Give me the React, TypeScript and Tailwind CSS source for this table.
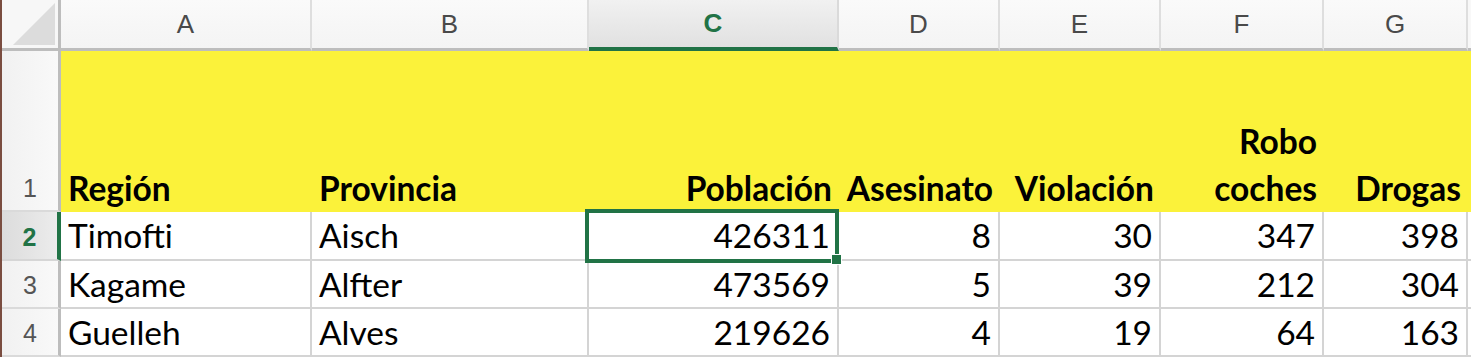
import React from 'react'

const GREEN = '#217346'
const YELLOW = '#fbf23a'

const cols = ['A', 'B', 'C', 'D', 'E', 'F', 'G']

// filas de datos: texto alineado a la izquierda en A y B, números a la derecha
const rows = [
  { n: 2, region: 'Timofti', prov: 'Aisch', vals: [426311, 8, 30, 347, 398] },
  { n: 3, region: 'Kagame', prov: 'Alfter', vals: [473569, 5, 39, 212, 304] },
  { n: 4, region: 'Guelleh', prov: 'Alves', vals: [219626, 4, 19, 64, 163] },
]

const bodyFont = { fontFamily: 'Lato, "Open Sans", sans-serif' }
const uiFont = { fontFamily: '"Liberation Sans", Arial, sans-serif' }

function ColHeader({ label, selected }: { label: string; selected?: boolean }) {
  return (
    <div
      style={uiFont}
      className={
        selected
          ? 'flex items-center justify-center border-r-2 border-r-[#dadada] border-b-4 border-b-[#217346] bg-gradient-to-b from-[#f1f1f1] to-[#e1e1e1] text-[26px] font-bold text-[#217346]'
          : 'flex items-center justify-center border-r-2 border-r-[#dedede] border-b-[3px] border-b-[#bdbdbd] bg-gradient-to-b from-[#fafafa] to-[#f4f4f4] text-[26px] text-[#4a4a4a]'
      }
    >
      {label}
    </div>
  )
}

function RowHeader({ n, selected }: { n: number; selected?: boolean }) {
  return (
    <div
      style={uiFont}
      className={
        selected
          ? 'flex items-end justify-center pb-[9px] border-r-4 border-r-[#217346] border-b-2 border-b-[#d6d6d6] bg-gradient-to-r from-[#dcdcdc] to-[#ececec] text-[25px] font-bold text-[#217346] leading-none'
          : 'flex items-end justify-center pb-[9px] border-r-[3px] border-r-[#bdbdbd] border-b-2 border-b-[#dadada] bg-gradient-to-r from-[#f1f1f1] to-[#f9f9f9] text-[25px] text-[#555555] leading-none'
      }
    >
      {n}
    </div>
  )
}

function HeadCell({ children, right }: { children: React.ReactNode; right?: boolean }) {
  return (
    <div
      style={{ ...bodyFont, backgroundColor: YELLOW }}
      className={
        'flex items-end whitespace-nowrap px-[7px] text-[33.5px] font-bold leading-[47px] text-black ' +
        (right ? 'justify-end text-right' : 'justify-start')
      }
    >
      <span>{children}</span>
    </div>
  )
}

function Cell({ children, right, rowH, selected }: { children: React.ReactNode; right?: boolean; rowH: string; selected?: boolean }) {
  return (
    <div
      style={bodyFont}
      className={
        'relative flex items-end whitespace-nowrap border-r-2 border-b-2 border-[#d4d4d4] bg-white px-[7px] text-[33.5px] text-black ' +
        rowH +
        (right ? ' justify-end' : ' justify-start')
      }
    >
      <span>{children}</span>
      {selected && (
        <>
          <div className="pointer-events-none absolute left-[-4px] top-[-3px] z-10 h-[54px] w-[254px] border-4 border-[#217346]" />
          <div className="absolute left-[242px] top-[42px] z-20 h-[11px] w-[11px] border border-white bg-[#217346]" />
        </>
      )}
    </div>
  )
}

export default function App() {
  return (
    <div className="h-[357px] w-[1471px] overflow-hidden border-l-2 border-l-[#7a4d40] bg-white">
      <div className="grid grid-cols-[59px_251px_277px_250px_161px_161px_163px_144px_1fr] grid-rows-[51px_161px_49px_48px_48px]">
        {/* esquina */}
        <div className="relative border-r-[3px] border-r-[#bdbdbd] border-b-[3px] border-b-[#bdbdbd] bg-[#f7f7f7]">
          <svg className="absolute left-[11px] top-[3px]" width="42" height="42" viewBox="0 0 42 42">
            <polygon points="0,42 42,42 42,0" fill="#dcdcdc" />
          </svg>
        </div>
        {cols.map((c) => (
          <ColHeader key={c} label={c} selected={c === 'C'} />
        ))}
        <div className="border-b-[3px] border-b-[#bdbdbd] bg-[#f8f8f8]" />

        {/* fila 1: encabezados en amarillo */}
        <RowHeader n={1} />
        <HeadCell>Región</HeadCell>
        <HeadCell>Provincia</HeadCell>
        <HeadCell right>Población</HeadCell>
        <HeadCell right>Asesinato</HeadCell>
        <HeadCell right>Violación</HeadCell>
        <HeadCell right>
          Robo
          <br />
          coches
        </HeadCell>
        <HeadCell right>Drogas</HeadCell>
        <div style={{ backgroundColor: YELLOW }} />

        {rows.map((r, i) => {
          const rowH = i === 0 ? 'leading-[47px]' : 'leading-[46px]'
          return (
            <React.Fragment key={r.n}>
              <RowHeader n={r.n} selected={r.n === 2} />
              <Cell rowH={rowH}>{r.region}</Cell>
              <Cell rowH={rowH}>{r.prov}</Cell>
              {r.vals.map((v, j) => (
                <Cell key={j} rowH={rowH} right selected={r.n === 2 && j === 0}>
                  {v}
                </Cell>
              ))}
              <div className="border-b-2 border-[#d4d4d4] bg-white" />
            </React.Fragment>
          )
        })}
      </div>
    </div>
  )
}
